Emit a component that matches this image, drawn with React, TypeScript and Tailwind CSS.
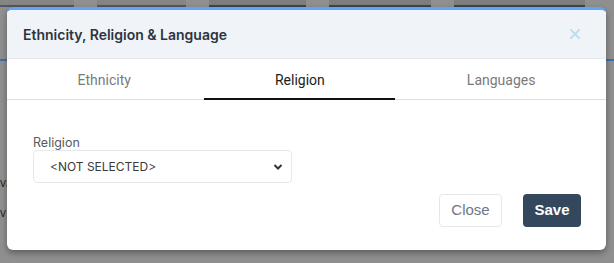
import { useState } from "react";

const tabs = ["Ethnicity", "Religion", "Languages"];

function App() {
  const [active, setActive] = useState("Religion");

  return (
    <div className="relative w-[614px] h-[263px] overflow-hidden bg-[#8f8f8f] font-['Inter',sans-serif]">
      {/* page behind the overlay */}
      <div className="flex gap-[23px] h-[7px]">
        <div className="w-[74px] border-b-2 border-[#55585c] bg-[#858585]" />
        <div className="w-[89px] border-b-2 border-[#55585c] bg-[#858585]" />
        <div className="w-[97px] border-b-2 border-[#3c4652] bg-[#7e7e7e]" />
        <div className="w-[102px] border-b-2 border-[#3c4652] bg-[#7e7e7e]" />
        <div className="w-[131px] border-b-2 border-[#3c4652] bg-[#7e7e7e]" />
      </div>
      <div className="mt-[52px] h-[2px] bg-[#3f6ea8]" />
      <div className="pt-[107px] text-[12px] leading-[30px] text-[#2a2a2a] font-['Liberation_Sans',sans-serif]">
        <div>va</div>
        <div>v</div>
      </div>

      {/* modal */}
      <div className="absolute left-[7px] top-[7px] w-[599px] h-[243px] rounded-md bg-white border-t-[3px] border-[#5fa5f7] shadow-[0_3px_6px_rgba(0,0,0,0.35)] flex flex-col overflow-hidden">
        <div className="h-[49px] shrink-0 bg-[#f0f4f9] border-b border-[#e4e7eb] flex items-center justify-between pl-4 pr-[26px]">
          <h2 className="text-[14px] font-semibold text-[#2d3440]">
            Ethnicity, Religion &amp; Language
          </h2>
          <svg width="10" height="10" viewBox="0 0 10 10" className="text-[#bfdff0]">
            <path d="M1 1L9 9M9 1L1 9" stroke="currentColor" strokeWidth="2" strokeLinecap="square" />
          </svg>
        </div>

        <div className="h-[41px] shrink-0 flex border-b border-[#dedede] font-['Roboto',sans-serif] text-[14px]">
          {tabs.map((t) => (
            <button
              key={t}
              onClick={() => setActive(t)}
              className={`flex-auto flex items-center justify-center pt-[3px] ${
                active === t ? "text-[#1c1c1c] border-b-2 border-[#111] mb-[-1px] ml-[3px] mr-[1px]" : "text-[#7a7a7a]"
              }`}
            >
              {t}
            </button>
          ))}
        </div>

        <div className="flex-1 px-[26px] pr-[25px] pt-[35px] flex flex-col">
          <label className="text-[12.5px] text-[#5a5a5a] leading-[15px]">Religion</label>
          <div className="w-[259px] h-[33px] border border-[#e6e8eb] rounded-[4px] flex items-center justify-between pl-[16px] pr-[8px]">
            <span className="text-[12px] text-[#3a3a3a]">&lt;NOT SELECTED&gt;</span>
            <svg width="10" height="8" viewBox="0 0 10 8">
              <path d="M1.5 2L5 5.5L8.5 2" fill="none" stroke="#333" strokeWidth="2" />
            </svg>
          </div>
          <div className="mt-[11px] flex justify-end gap-[21px] font-['Liberation_Sans',sans-serif] text-[15px]">
            <button className="w-[63px] h-[33px] border border-[#e5e7eb] rounded-[4px] text-[#6d7787]">Close</button>
            <button className="w-[58px] h-[33px] rounded-[4px] bg-[#34485d] text-white font-semibold">Save</button>
          </div>
        </div>
      </div>
    </div>
  );
}

export default App;
